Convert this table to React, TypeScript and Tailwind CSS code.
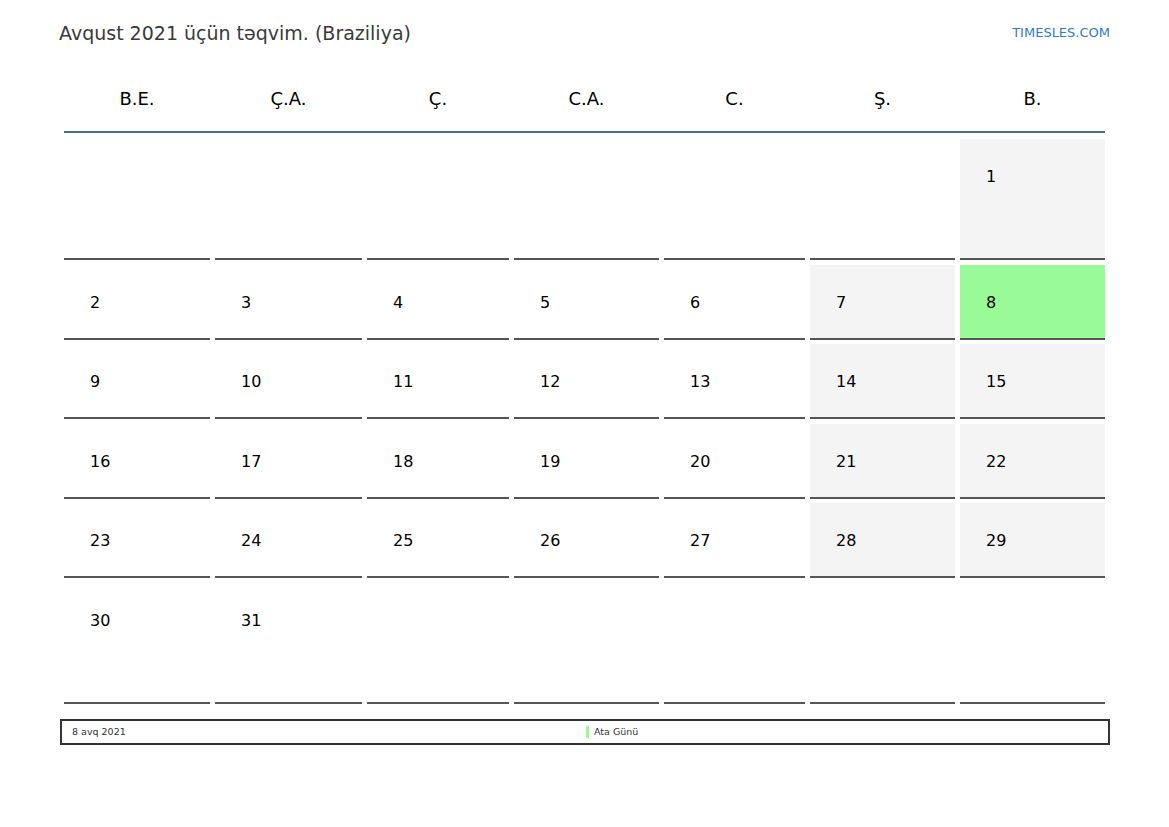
const days = ["B.E.", "Ç.A.", "Ç.", "C.A.", "C.", "Ş.", "B."];

// first of august 2021 falls on sunday -> 6 empty cells
const weeks: (number | null)[][] = [
  [null, null, null, null, null, null, 1],
  [2, 3, 4, 5, 6, 7, 8],
  [9, 10, 11, 12, 13, 14, 15],
  [16, 17, 18, 19, 20, 21, 22],
  [23, 24, 25, 26, 27, 28, 29],
  [30, 31, null, null, null, null, null],
];

const holiday = 8;

function Cell({ day, col, tall }: { day: number | null; col: number; tall: boolean }) {
  const weekend = day !== null && col >= 5;
  const bg = day === holiday ? "bg-[#98fb98]" : weekend ? "bg-[#f4f4f4]" : "bg-white";
  return (
    <div
      className={`${bg} ${tall ? "h-[121px]" : "h-[75px]"} border-b-2 border-[#555] pl-[26px] pt-[26px]`}
    >
      {day !== null && <span className="text-[16px] leading-[18px] text-black">{day}</span>}
    </div>
  );
}

export default function App() {
  return (
    <div className="w-[1169px] h-[827px] bg-white font-['DejaVu_Sans',sans-serif] text-[#222]">
      {/* top line */}
      <div className="flex items-center justify-between pl-[59px] pr-[59px] pt-[20px]">
        <h1 className="text-[19px] leading-[26px] text-[#3a3a3a]">Avqust 2021 üçün təqvim. (Braziliya)</h1>
        <span className="text-[13px] leading-[16px] text-[#2d7cc9]">TIMESLES.COM</span>
      </div>

      {/* calendar */}
      <div className="ml-[64px] w-[1041px] mt-[19px]">
        <div className="grid grid-cols-[146px_147px_142px_145px_141px_145px_145px] gap-x-[5px] border-b-2 border-[#4c6e9c]">
          {days.map((d) => (
            <div key={d} className="h-[66px] flex items-center justify-center text-[18px] text-black">
              {d}
            </div>
          ))}
        </div>
        <div className="mt-[6px] grid grid-cols-[146px_147px_142px_145px_141px_145px_145px] gap-x-[5px] gap-y-[4.6px]">
          {weeks.map((w, wi) =>
            w.map((d, ci) => (
              <Cell key={`${wi}-${ci}`} day={d} col={ci} tall={wi === 0 || wi === weeks.length - 1} />
            ))
          )}
        </div>
      </div>

      {/* holidays footer */}
      <div className="ml-[60px] mt-[15px] w-[1050px] h-[26px] border-2 border-[#333] flex items-center text-[9.5px] text-[#333]">
        <div className="w-[515px] pl-[10px]">8 avq 2021</div>
        <div className="flex items-center gap-[5px] pl-[9px]">
          <span className="w-[3px] h-[12px] bg-[#98fb98]" />
          <span>Ata Günü</span>
        </div>
      </div>
    </div>
  );
}
